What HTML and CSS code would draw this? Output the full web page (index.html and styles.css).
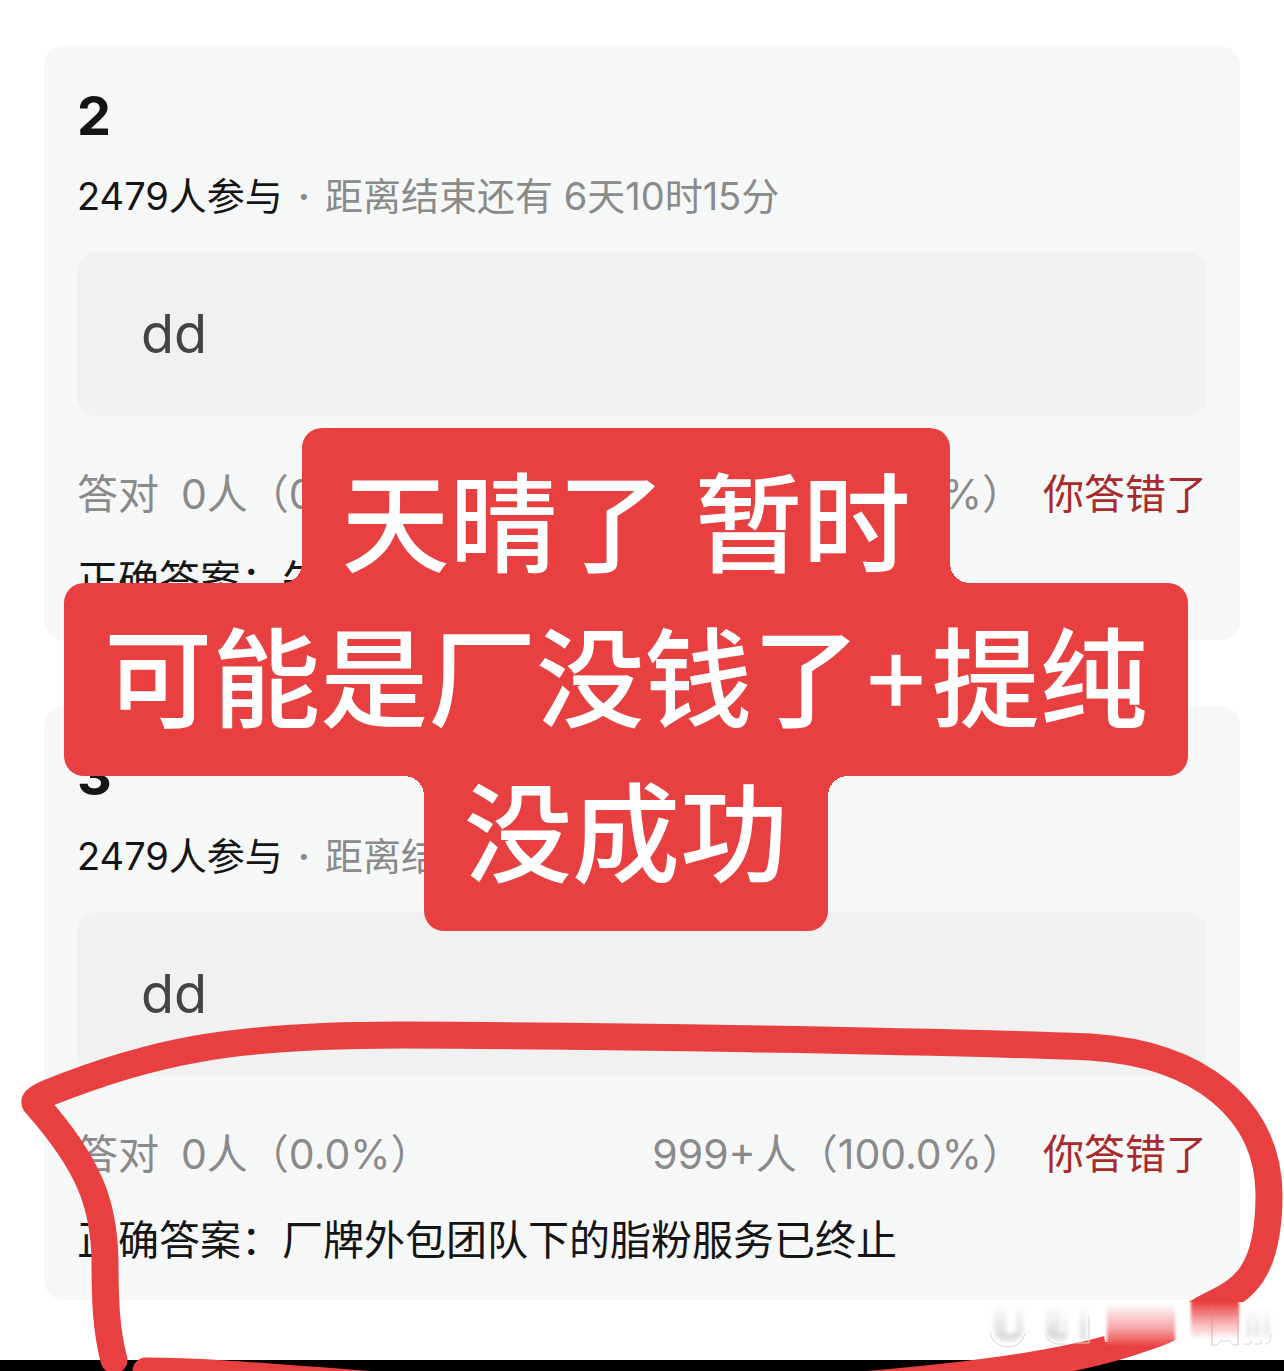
FILE: index.html
```
<!DOCTYPE html>
<html lang="zh-CN">

<head>
    <meta charset="UTF-8">
    <meta name="viewport" content="width=device-width, initial-scale=1.0">
    <title>投票</title>
    <link rel="stylesheet" href="styles.css">
</head>

<body>
    <div class="page">
        <main class="list">
            <section class="card">
                <h2>2</h2>
                <p class="meta"><span class="joined">2479人参与</span><span class="dot">·</span>距离结束还有 6天10时15分</p>
                <div class="option">dd</div>
                <div class="result">
                    <span class="label">答对</span>
                    <span>0人（0.0%）</span>
                    <span class="wrong-count">999+人（100.0%）</span>
                    <span class="status">你答错了</span>
                </div>
                <p class="answer">正确答案：午</p>
            </section>

            <section class="card">
                <h2>3</h2>
                <p class="meta"><span class="joined">2479人参与</span><span class="dot">·</span>距离结束还有 6天10时15分</p>
                <div class="option">dd</div>
                <div class="result">
                    <span class="label">答对</span>
                    <span>0人（0.0%）</span>
                    <span class="wrong-count">999+人（100.0%）</span>
                    <span class="status">你答错了</span>
                </div>
                <p class="answer">正确答案：厂牌外包团队下的脂粉服务已终止</p>
            </section>
        </main>
        <div class="bottom-bar"></div>

        <div class="sticker">
            <div class="line line-top">天晴了 暂时</div>
            <div class="line line-mid">可能是厂没钱了<span class="plus">+</span>提纯</div>
            <div class="line line-end">没成功</div>
        </div>

        <svg class="marker" viewBox="0 0 1284 1371" aria-hidden="true">
            <defs>
                <linearGradient id="fadeIn" x1="0" y1="0" x2="0" y2="1">
                    <stop offset="0" stop-color="#fff" />
                    <stop offset="0.5" stop-color="#f6aaab" />
                    <stop offset="0.9" stop-color="#e84040" />
                </linearGradient>
                <linearGradient id="fadeOut" x1="0" y1="0" x2="0" y2="1">
                    <stop offset="0" stop-color="#e84040" />
                    <stop offset="0.5" stop-color="#f6a9a9" />
                    <stop offset="1" stop-color="#fff" />
                </linearGradient>
                <linearGradient id="grey" x1="0" y1="0" x2="0" y2="1">
                    <stop offset="0" stop-color="#ddd" stop-opacity="0" />
                    <stop offset="0.8" stop-color="#dcdcdc" />
                    <stop offset="1" stop-color="#eee" />
                </linearGradient>
                <filter id="soft" x="-20%" y="-20%" width="140%" height="140%">
                    <feGaussianBlur stdDeviation="1.5 0" />
                </filter>
                <filter id="softer" x="-20%" y="-20%" width="140%" height="140%">
                    <feGaussianBlur stdDeviation="2.5 1" />
                </filter>
            </defs>

            <g class="stroke">
                <path d="M114 1360C106 1330 105 1300 105 1260C104 1205 90 1165 35 1103C34 1100 39 1097 48 1093C150 1052 230 1035 400 1035C600 1036 900 1040 1090 1047C1200 1054 1269 1110 1269 1195C1269 1290 1230 1293 1200 1311C1130 1358 990 1380 700 1396C450 1400 270 1371 146 1371" />
            </g>

            <!-- smudged watermark -->
            <path d="M1100 1302H1244V1340H1175L1105 1342Z" fill="#fff" />
            <path d="M1107 1303H1175V1340Q1140 1358 1107 1348Z" fill="url(#fadeIn)" filter="url(#soft)" />
            <path d="M1191 1302H1239V1340H1191Z" fill="url(#fadeOut)" filter="url(#soft)" />
            <g filter="url(#softer)" fill="url(#grey)">
                <path d="M994 1304H1006V1330Q1010 1338 1016 1330V1304H1023V1330Q1020 1343 1008 1343Q995 1342 994 1328Z" />
                <path d="M1046 1304H1060V1333H1064V1304H1067V1340Q1048 1346 1046 1330Z" />
                <path d="M1080 1304H1086V1341H1080Z" />
                <path d="M1247 1304H1251V1338H1247ZM1255 1304H1259V1338H1255ZM1265 1304H1269V1338H1265Z" />
            </g>
            <g fill="none" stroke="#d6d6d6" stroke-width="1">
                <path d="M990 1332Q992 1346 1008 1347Q1022 1346 1025 1334" />
                <path d="M1045 1334Q1048 1346 1066 1344M1075 1343H1089V1316" />
                <path d="M1212 1345H1217L1220 1341H1230L1233 1345H1238" />
                <path d="M1244 1344H1251V1340M1255 1344H1261V1340M1265 1344Q1271 1345 1271 1334" />
                <path d="M1212 1306V1345M1238 1306V1345" stroke="#d08a8a" stroke-opacity="0.6" />
            </g>
        </svg>
    </div>
</body>

</html>
```
FILE: styles.css
```
:root {
    --red: #e84040;
    --card: #f6f7f7;
    --option: #f1f1f1;
    --grey: #8a8a8a;
    --black: #151515;
}

* {
    box-sizing: border-box;
}

body {
    margin: 0;
    background-color: white;
    color: var(--black);
    font-family: Inter, "Noto Sans CJK SC", sans-serif;
}

.page {
    position: relative;
    overflow: hidden;
}

.list {
    display: flex;
    flex-direction: column;
    gap: 66px;
    padding: 46px 44px 60px;
}

.card {
    padding: 40px 33px 30px;
    border-radius: 20px;
    background-color: var(--card);
}

h2,
p {
    margin: 0;
}

h2 {
    font-size: 54px;
    line-height: 60px;
    font-weight: 700;
}

.meta {
    margin-top: 22px;
    font-size: 38px;
    line-height: 56px;
    color: var(--grey);
}

.joined {
    color: var(--black);
}

.dot {
    margin: 0 15px;
    font-weight: 600;
}

.option {
    margin-top: 28px;
    padding: 50px 64px;
    border-radius: 20px;
    background-color: var(--option);
    font-size: 54px;
    line-height: 64px;
    color: #444;
}

.result {
    display: flex;
    margin-top: 48px;
    font-size: 41px;
    line-height: 60px;
    color: var(--grey);
}

.label {
    margin-right: 22px;
}

.wrong-count {
    margin-left: auto;
}

.status {
    margin-left: 20px;
    color: #a82a2a;
}

.answer {
    margin-top: 26px;
    font-size: 41px;
    line-height: 60px;
}

/* red caption over the cards */
.sticker {
    position: absolute;
    top: 428px;
    left: 0;
    right: 32px;
    display: flex;
    flex-direction: column;
    align-items: center;
    color: white;
    font-size: 108px;
    font-weight: 500;
    white-space: nowrap;
}

.line {
    position: relative;
    padding: 0 40px;
    line-height: 193px;
    border-radius: 20px;
    background-color: var(--red);
}

.line-top,
.line-end {
    height: 155px;
}

.line-top {
    border-radius: 20px 20px 0 0;
}

.line-end {
    line-height: 117px;
    border-radius: 0 0 20px 20px;
}

.plus {
    font-weight: 400;
    font-feature-settings: "case";
}

/* inner rounded corners where the lines join */
.line-top::before,
.line-top::after,
.line-end::before,
.line-end::after {
    content: "";
    position: absolute;
    width: 20px;
    height: 20px;
}

.line-top::before,
.line-top::after {
    bottom: 0;
}

.line-end::before,
.line-end::after {
    top: 0;
}

.line::before {
    right: 100%;
}

.line::after {
    left: 100%;
}

.line-top::before {
    background: radial-gradient(circle at 0 0, transparent 20px, var(--red) 20px);
}

.line-top::after {
    background: radial-gradient(circle at 100% 0, transparent 20px, var(--red) 20px);
}

.line-end::before {
    background: radial-gradient(circle at 0 100%, transparent 20px, var(--red) 20px);
}

.line-end::after {
    background: radial-gradient(circle at 100% 100%, transparent 20px, var(--red) 20px);
}

.marker {
    position: absolute;
    top: 0;
    left: 0;
    width: 100%;
}

.stroke {
    fill: none;
    stroke: var(--red);
    stroke-width: 27px;
    stroke-linecap: round;
    stroke-linejoin: round;
}

.bottom-bar {
    height: 11px;
    background-color: black;
}
```
